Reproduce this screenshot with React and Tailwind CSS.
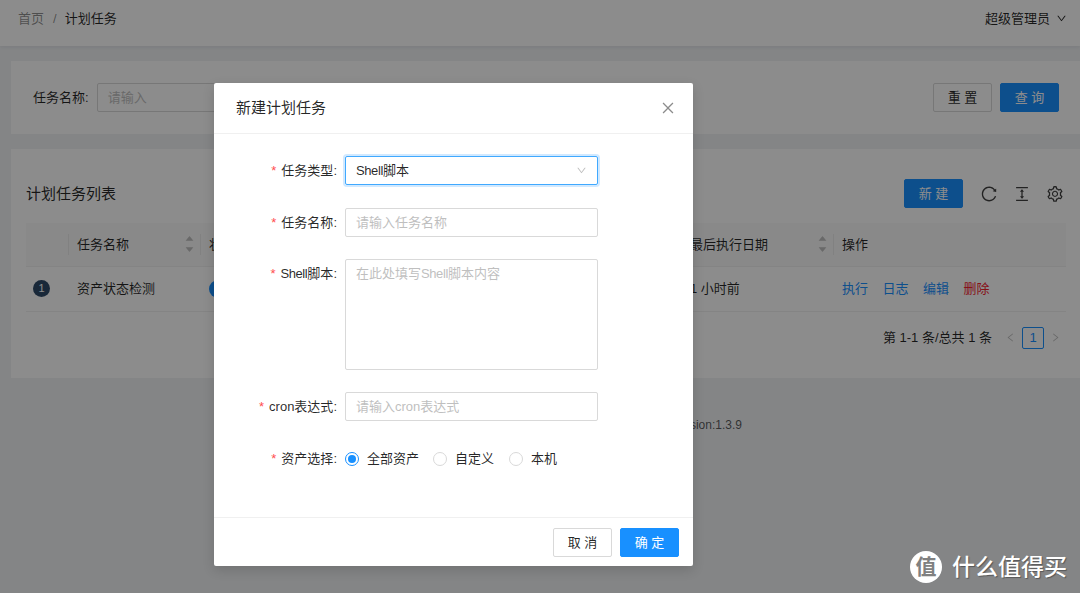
import {
  AiFillCaretDown,
  AiFillCaretUp,
  AiOutlineClose,
  AiOutlineColumnHeight,
  AiOutlineDown,
  AiOutlineLeft,
  AiOutlineReload,
  AiOutlineRight,
  AiOutlineSetting,
} from "react-icons/ai";

const FONT = "font-['Liberation_Sans','Noto_Sans_CJK_SC',sans-serif]";

function Button({ children, primary, className = "" }) {
  return (
    <button
      className={`h-[29px] w-[59px] rounded-[2px] border text-[13px] ${
        primary
          ? "border-[#1890ff] bg-[#1890ff] text-white"
          : "border-[#d9d9d9] bg-white text-[rgba(0,0,0,0.85)]"
      } ${className}`}
    >
      {children}
    </button>
  );
}

function Sorter() {
  return (
    <span className="-mr-[2px] flex flex-col text-[11px] leading-[6px] text-[#bfbfbf]">
      <AiFillCaretUp />
      <AiFillCaretDown />
    </span>
  );
}

function Th({ children, sort, divider = true }) {
  return (
    <th className="relative border-b border-[#f0f0f0] px-2 text-left font-normal">
      <div className="flex items-center justify-between">
        <span className="whitespace-nowrap">{children}</span>
        {sort && <Sorter />}
      </div>
      {divider && (
        <span className="absolute top-[11px] right-0 h-[21px] w-px bg-[#ececec]" />
      )}
    </th>
  );
}

function Field({ label, children, className = "" }) {
  return (
    <div className={`flex items-start ${className}`}>
      <label className="flex h-[29px] w-[131px] shrink-0 items-center justify-end pr-[8px] text-[13px] whitespace-nowrap text-[rgba(0,0,0,0.85)]">
        <span className="mr-[5px] text-[#ff4d4f]">*</span>
        {label}:
      </label>
      {children}
    </div>
  );
}

function Placeholder({ children }) {
  return (
    <div className="flex h-[29px] w-[253px] items-center rounded-[2px] border border-[#d9d9d9] px-[10px] text-[13px] text-[#bfbfbf]">
      {children}
    </div>
  );
}

function Radio({ checked, children, className = "" }) {
  return (
    <label className={`flex items-center text-[13px] text-[rgba(0,0,0,0.85)] ${className}`}>
      <span
        className={`mr-2 flex h-[14px] w-[14px] items-center justify-center rounded-full border ${
          checked ? "border-[#1890ff]" : "border-[#d9d9d9]"
        }`}
      >
        {checked && <span className="h-[8px] w-[8px] rounded-full bg-[#1890ff]" />}
      </span>
      {children}
    </label>
  );
}

function Shell() {
  return <span className="tracking-[-0.4px]">Shell</span>;
}

function Modal() {
  return (
    <div className="absolute top-[83px] left-[214px] flex h-[483px] w-[479px] flex-col rounded-[2px] bg-white shadow-[0_4px_12px_rgba(0,0,0,0.15)]">
      <div className="flex h-[51px] shrink-0 items-center justify-between border-b border-[#f0f0f0] pr-[17px] pl-[22px]">
        <span className="text-[15px] text-[rgba(0,0,0,0.85)]">新建计划任务</span>
        <AiOutlineClose className="text-[16px] text-[#8c8c8c]" />
      </div>
      <div className="flex flex-1 flex-col gap-[22px] pt-[22px]">
        <Field label="任务类型">
          <div className="flex h-[29px] w-[253px] items-center justify-between rounded-[2px] border border-[#40a9ff] px-[10px] text-[13px] text-[rgba(0,0,0,0.85)] shadow-[0_0_0_2px_rgba(24,144,255,0.2)]">
            <span><Shell />脚本</span>
            <AiOutlineDown className="text-[11px] text-[#bfbfbf]" />
          </div>
        </Field>
        <Field label="任务名称" className="mt-[1px]">
          <Placeholder>请输入任务名称</Placeholder>
        </Field>
        <Field label={<span><Shell />脚本</span>}>
          <div className="h-[111px] w-[253px] rounded-[2px] border border-[#d9d9d9] px-[10px] py-[5px] text-[13px] leading-[18px] text-[#bfbfbf]">
            在此处填写<Shell />脚本内容
          </div>
        </Field>
        <Field label="cron表达式">
          <Placeholder>请输入cron表达式</Placeholder>
        </Field>
        <Field label="资产选择" className="mt-[1px]">
          <div className="flex h-[29px] items-center">
            <Radio checked className="mr-[14px]">全部资产</Radio>
            <Radio className="mr-[15px]">自定义</Radio>
            <Radio>本机</Radio>
          </div>
        </Field>
      </div>
      <div className="flex h-[49px] shrink-0 items-center justify-end gap-2 border-t border-[#f0f0f0] pt-[1px] pr-[14px]">
        <Button>取 消</Button>
        <Button primary>确 定</Button>
      </div>
    </div>
  );
}

function Watermark() {
  return (
    <div className="absolute top-[551px] left-[910px] flex items-center">
      <span className="flex h-[32px] w-[32px] items-center justify-center rounded-full bg-white text-[21px] font-bold text-[#808080]">
        值
      </span>
      <span className="-mt-[1px] ml-[10px] text-[23px] leading-[32px] font-medium whitespace-nowrap text-white [text-shadow:1px_1px_1px_rgba(0,0,0,0.35)]">
        什么值得买
      </span>
    </div>
  );
}

export default function App() {
  return (
    <div className={`relative h-[593px] w-[1080px] overflow-hidden bg-[#f0f2f5] ${FONT}`}>
      <header className="flex h-[46px] items-center justify-between bg-white pr-[13px] pb-[9px] pl-[18px] text-[13px] text-[rgba(0,0,0,0.85)] shadow-[0_1px_4px_rgba(0,21,41,0.08)]">
        <div className="flex items-center">
          <span className="text-[rgba(0,0,0,0.45)]">首页</span>
          <span className="mr-[8px] ml-[9px] text-[rgba(0,0,0,0.45)]">/</span>
          <span>计划任务</span>
        </div>
        <div className="flex items-center gap-[6px]">
          超级管理员
          <AiOutlineDown className="text-[11px]" />
        </div>
      </header>

      <main className="pt-[15px] pl-[11px]">
        <section className="flex h-[73px] items-center justify-between bg-white pr-[21px] pl-[22px]">
          <div className="flex items-center text-[13px] text-[rgba(0,0,0,0.85)]">
            任务名称:
            <div className="ml-[8px] flex h-[29px] w-[300px] items-center rounded-[2px] border border-[#d9d9d9] px-[10px] text-[#bfbfbf]">
              请输入
            </div>
          </div>
          <div className="flex gap-2">
            <Button>重 置</Button>
            <Button primary>查 询</Button>
          </div>
        </section>

        <section className="mt-[15px] h-[229px] bg-white pt-[30px] pr-[16px] pl-[15px]">
          <div className="flex h-[29px] items-center justify-between">
            <h2 className="pt-[1px] text-[15px] text-[rgba(0,0,0,0.85)]">计划任务列表</h2>
            <div className="flex items-center">
              <Button primary>新 建</Button>
              <div className="ml-[17px] flex gap-[15px] text-[18px] text-[rgba(0,0,0,0.75)]">
                <AiOutlineReload />
                <AiOutlineColumnHeight />
                <AiOutlineSetting />
              </div>
            </div>
          </div>

          <table className="mt-[15px] w-[1040px] table-fixed border-collapse text-[13px] text-[rgba(0,0,0,0.85)]">
            <colgroup>
              <col className="w-[43px]" />
              <col className="w-[132px]" />
              <col className="w-[481px]" />
              <col className="w-[152px]" />
              <col className="w-[232px]" />
            </colgroup>
            <thead>
              <tr className="h-[43px] bg-[#fafafa]">
                <Th />
                <Th sort>任务名称</Th>
                <Th>状态</Th>
                <Th sort>最后执行日期</Th>
                <Th divider={false}>操作</Th>
              </tr>
            </thead>
            <tbody>
              <tr className="h-[45px] border-b border-[#f0f0f0]">
                <td className="px-2">
                  <span className="-ml-px flex h-[17px] w-[17px] items-center justify-center rounded-full bg-[#2f4a68] text-[11px] text-white">
                    1
                  </span>
                </td>
                <td className="px-2 whitespace-nowrap">资产状态检测</td>
                <td className="px-2">
                  <span className="block h-[18px] w-[40px] rounded-full bg-[#1890ff]" />
                </td>
                <td className="px-2 whitespace-nowrap">1 小时前</td>
                <td className="px-2">
                  <div className="flex gap-[14.5px] text-[#1890ff]">
                    <span>执行</span>
                    <span>日志</span>
                    <span>编辑</span>
                    <span className="text-[#f5222d]">删除</span>
                  </div>
                </td>
              </tr>
            </tbody>
          </table>

          <div className="mt-[15px] flex h-[22px] w-[1040px] items-center justify-end pr-[5px] text-[13px] text-[rgba(0,0,0,0.85)]">
            第 1-1 条/总共 1 条
            <AiOutlineLeft className="ml-[13px] text-[11px] text-[#bfbfbf]" />
            <span className="mx-[6px] flex h-[22px] w-[22px] items-center justify-center rounded-[2px] border border-[#1890ff] text-[#1890ff]">
              1
            </span>
            <AiOutlineRight className="text-[11px] text-[#bfbfbf]" />
          </div>
        </section>

        <footer className="mt-[38px] pr-[338px] text-right text-[12px] leading-[18px] text-[rgba(0,0,0,0.65)]">
          Version:1.3.9
        </footer>
      </main>

      <div className="absolute inset-0 bg-[rgba(0,0,0,0.45)]" />
      <Modal />
      <Watermark />
    </div>
  );
}
